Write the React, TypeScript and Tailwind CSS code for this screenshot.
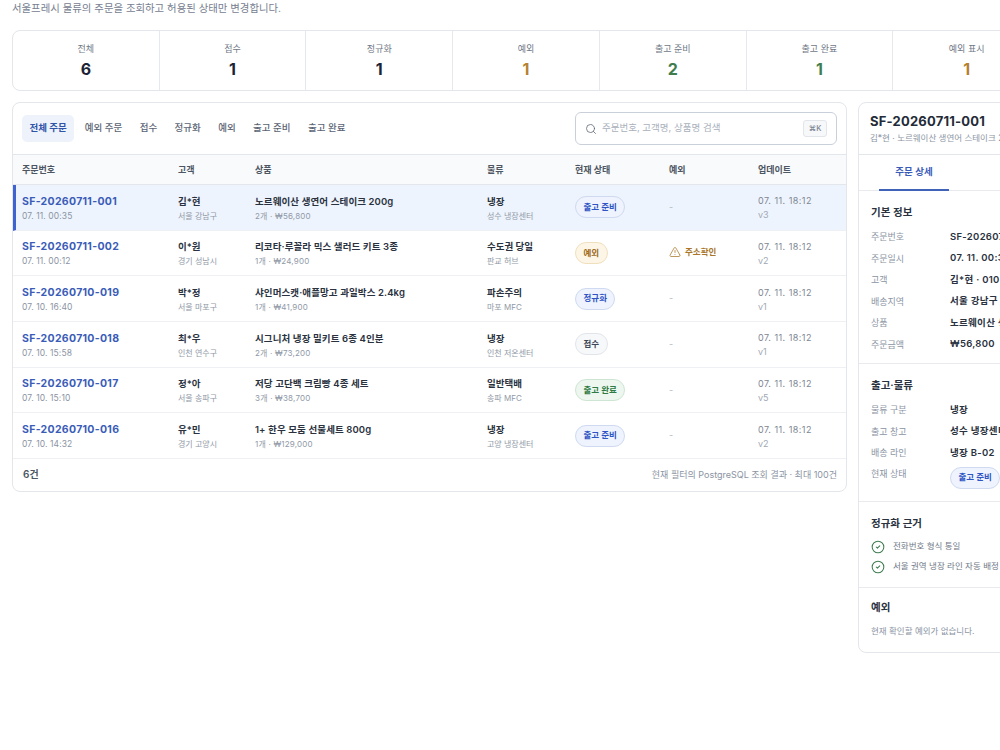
import { AlertTriangle, CircleCheck, Search } from 'lucide-react'

type Status = '출고 준비' | '예외' | '정규화' | '접수' | '출고 완료'

interface Order {
  id: string
  date: string
  customer: string
  region: string
  product: string
  meta: string
  logistics: string
  hub: string
  status: Status
  exception?: string
  version: string
}

const stats = [
  { label: '전체', value: '6', color: 'text-[#1a2233]' },
  { label: '접수', value: '1', color: 'text-[#1a2233]' },
  { label: '정규화', value: '1', color: 'text-[#1a2233]' },
  { label: '예외', value: '1', color: 'text-[#b5812f]' },
  { label: '출고 준비', value: '2', color: 'text-[#3f7d4e]' },
  { label: '출고 완료', value: '1', color: 'text-[#3f7d4e]' },
  { label: '예외 표시', value: '1', color: 'text-[#b5812f]' },
]

const tabs = ['예외 주문', '접수', '정규화', '예외', '출고 준비', '출고 완료']

const orders: Order[] = [
  { id: 'SF-20260711-001', date: '07. 11. 00:35', customer: '김*현', region: '서울 강남구', product: '노르웨이산 생연어 스테이크 200g', meta: '2개 · ₩56,800', logistics: '냉장', hub: '성수 냉장센터', status: '출고 준비', version: 'v3' },
  { id: 'SF-20260711-002', date: '07. 11. 00:12', customer: '이*원', region: '경기 성남시', product: '리코타·루꼴라 믹스 샐러드 키트 3종', meta: '1개 · ₩24,900', logistics: '수도권 당일', hub: '판교 허브', status: '예외', exception: '주소확인', version: 'v2' },
  { id: 'SF-20260710-019', date: '07. 10. 16:40', customer: '박*정', region: '서울 마포구', product: '샤인머스캣·애플망고 과일박스 2.4kg', meta: '1개 · ₩41,900', logistics: '파손주의', hub: '마포 MFC', status: '정규화', version: 'v1' },
  { id: 'SF-20260710-018', date: '07. 10. 15:58', customer: '최*우', region: '인천 연수구', product: '시그니처 냉장 밀키트 6종 4인분', meta: '2개 · ₩73,200', logistics: '냉장', hub: '인천 저온센터', status: '접수', version: 'v1' },
  { id: 'SF-20260710-017', date: '07. 10. 15:10', customer: '정*아', region: '서울 송파구', product: '저당 고단백 크림빵 4종 세트', meta: '3개 · ₩38,700', logistics: '일반택배', hub: '송파 MFC', status: '출고 완료', version: 'v5' },
  { id: 'SF-20260710-016', date: '07. 10. 14:32', customer: '유*민', region: '경기 고양시', product: '1+ 한우 모둠 선물세트 800g', meta: '1개 · ₩129,000', logistics: '냉장', hub: '고양 냉장센터', status: '출고 준비', version: 'v2' },
]

const basicInfo = [
  ['주문번호', 'SF-20260711-001'],
  ['주문일시', '07. 11. 00:35'],
  ['고객', '김*현 · 010-****-1234'],
  ['배송지역', '서울 강남구'],
  ['상품', '노르웨이산 생연어 스테이크'],
  ['주문금액', '₩56,800'],
]

const shipInfo = [
  ['물류 구분', '냉장'],
  ['출고 창고', '성수 냉장센터'],
  ['배송 라인', '냉장 B-02'],
]

function StatusBadge({ status }: { status: Status }) {
  const tone =
    status === '예외'
      ? 'bg-[#fdf5e6] border-[#f0dfbd] text-[#9a6a1c]'
      : status === '접수'
        ? 'bg-[#f7f8fa] border-[#e1e5eb] text-[#3d4656]'
        : status === '출고 완료'
          ? 'bg-[#edf7ef] border-[#cfe5d4] text-[#2f7a45]'
          : 'bg-[#eef3fd] border-[#cfdaf1] text-[#2f54c4]'
  return (
    <span className={`inline-flex h-[22px] items-center rounded-full border px-[7.5px] text-[8.5px] font-semibold ${tone}`}>
      {status}
    </span>
  )
}

function InfoRow({ label, value }: { label: string; value: string }) {
  return (
    <div className="flex h-[21.5px] items-center whitespace-nowrap">
      <span className="w-[79px] shrink-0 text-[9px] text-[#8b94a3]">{label}</span>
      <span className="text-[9.5px] font-semibold tracking-[0.3px] text-[#2a3240]">{value}</span>
    </div>
  )
}

export default function App() {
  return (
    <div className="h-[750px] w-[1000px] overflow-hidden bg-white font-['Inter','Noto_Sans_CJK_KR',sans-serif]">
      <div className="w-[1040px] pl-3">
        <p className="h-[30px] pt-[2px] text-[10.4px] leading-[14px] text-[#778090]">
          서울프레시 물류의 주문을 조회하고 허용된 상태만 변경합니다.
        </p>

        <div className="grid w-[1029px] grid-cols-7 divide-x divide-[#e5e8ed] rounded-[8px] border border-[#e3e6eb]">
          {stats.map((s) => (
            <div key={s.label} className="flex h-[59px] flex-col items-center pt-[12px]">
              <span className="text-[9px] leading-[12px] text-[#6f7886]">{s.label}</span>
              <span className={`mt-[3px] text-[16px] font-bold leading-[22px] ${s.color}`}>{s.value}</span>
            </div>
          ))}
        </div>

        <div className="mt-[11px] flex items-start gap-[11px]">
          <div className="w-[835px] shrink-0 overflow-hidden rounded-[8px] border border-[#e3e6eb]">
            <div className="flex h-[51px] items-center justify-between pl-[9px] pr-[9px]">
              <div className="flex items-center gap-[17.4px] text-[9.5px] text-[#5b6474]">
                <span className="-mr-[7px] flex h-[27px] items-center rounded-[5px] bg-[#eef3fb] px-[7.5px] font-semibold text-[#2f54a8]">전체 주문</span>
                {tabs.map((t) => (
                  <span key={t} className="font-medium">{t}</span>
                ))}
              </div>
              <div className="flex h-[33px] w-[262px] items-center rounded-[6px] border border-[#c9d0da] pl-[9px] pr-[9px]">
                <Search className="h-[12px] w-[12px] text-[#5f6876]" strokeWidth={1.6} />
                <span className="ml-[5px] text-[9.5px] text-[#a9b0bb]">주문번호, 고객명, 상품명 검색</span>
                <span className="ml-auto flex h-[17px] w-[24px] items-center justify-center rounded-[3px] border border-[#e2e5ea] bg-[#f7f8fa] text-[7.5px] font-medium text-[#7b8492]">⌘K</span>
              </div>
            </div>

            <div className="grid h-[31px] grid-cols-[156px_77px_232px_88px_94px_89px_1fr] items-center border-y border-[#e3e6eb] bg-[#f9fafb] pl-[9px] text-[9px] font-semibold text-[#4d5663]">
              <span>주문번호</span>
              <span>고객</span>
              <span>상품</span>
              <span>물류</span>
              <span>현재 상태</span>
              <span>예외</span>
              <span>업데이트</span>
            </div>

            {orders.map((o, i) => (
              <div
                key={o.id}
                className={`grid h-[45.67px] grid-cols-[156px_77px_232px_88px_94px_89px_1fr] items-center border-b border-[#eef0f3] pt-[2px] ${i === 0 ? 'border-l-[3px] border-l-[#3f63d0] bg-[#eef4fd] pl-[6px]' : 'pl-[9px]'}`}
              >
                <div>
                  <div className="text-[10.5px] font-bold leading-[15px] tracking-[0.3px] text-[#3a5cb8]">{o.id}</div>
                  <div className="mt-[1px] text-[8.5px] leading-[13px] tracking-[0.1px] text-[#8b94a3]">{o.date}</div>
                </div>
                <div>
                  <div className="text-[9.5px] font-semibold leading-[15px] text-[#2a3240]">{o.customer}</div>
                  <div className="mt-[1px] text-[8px] leading-[13px] text-[#9099a7]">{o.region}</div>
                </div>
                <div>
                  <div className="text-[9.5px] font-semibold leading-[15px] tracking-[0.1px] text-[#2a3240]">{o.product}</div>
                  <div className="mt-[1px] text-[8px] leading-[13px] tracking-[0.2px] text-[#9099a7]">{o.meta}</div>
                </div>
                <div>
                  <div className="text-[9.5px] font-semibold leading-[15px] text-[#2a3240]">{o.logistics}</div>
                  <div className="mt-[1px] text-[8px] leading-[13px] text-[#9099a7]">{o.hub}</div>
                </div>
                <div className="flex items-center pb-[2px]">
                  <StatusBadge status={o.status} />
                </div>
                <div className="flex items-center pb-[3px]">
                  {o.exception ? (
                    <span className="flex items-center gap-[4px] text-[8.5px] font-semibold text-[#a9762a]">
                      <AlertTriangle className="h-[12px] w-[12px]" strokeWidth={1.5} />
                      {o.exception}
                    </span>
                  ) : (
                    <span className="text-[9px] text-[#b4bac4]">-</span>
                  )}
                </div>
                <div>
                  <div className="text-[9px] leading-[14px] tracking-[0.45px] text-[#7d8694]">07. 11. 18:12</div>
                  <div className="text-[9px] leading-[14px] text-[#a0a8b4]">{o.version}</div>
                </div>
              </div>
            ))}

            <div className="flex h-[32px] items-center justify-between pl-[10px] pr-[9px]">
              <span className="text-[10px] font-semibold text-[#4d5663]">6건</span>
              <span className="text-[9px] text-[#8b94a3]">현재 필터의 PostgreSQL 조회 결과 · 최대 100건</span>
            </div>
          </div>

          <div className="h-[551px] w-[300px] shrink-0 overflow-hidden rounded-[8px] border border-[#e3e6eb]">
            <div className="h-[52px] border-b border-[#e3e6eb] pl-[11px] pt-[9px]">
              <div className="text-[13px] font-bold leading-[18px] tracking-[0.2px] text-[#232b38]">SF-20260711-001</div>
              <div className="mt-[2px] whitespace-nowrap text-[8.5px] leading-[13px] text-[#8b94a3]">김*현 · 노르웨이산 생연어 스테이크 200g</div>
            </div>
            <div className="h-[36px] border-b border-[#e8eaee] pl-[20px]">
              <div className="flex h-[36px] w-[70px] items-center justify-center border-b-2 border-[#3f63b8] text-[9.5px] font-semibold text-[#3a5cb8]">주문 상세</div>
            </div>

            <section className="border-b border-[#e8eaee] px-[12px] pb-[8px] pt-[14px]">
              <h3 className="mb-[5px] text-[10.5px] font-semibold leading-[16px] text-[#2a3240]">기본 정보</h3>
              {basicInfo.map(([label, value]) => (
                <InfoRow key={label} label={label} value={value} />
              ))}
            </section>

            <section className="border-b border-[#e8eaee] px-[12px] pb-[12px] pt-[14px]">
              <h3 className="mb-[5px] text-[10.5px] font-semibold leading-[16px] text-[#2a3240]">출고·물류</h3>
              {shipInfo.map(([label, value]) => (
                <InfoRow key={label} label={label} value={value} />
              ))}
              <div className="flex items-start pt-[3px]">
                <span className="w-[79px] text-[9px] leading-[14px] text-[#8b94a3]">현재 상태</span>
                <StatusBadge status="출고 준비" />
              </div>
            </section>

            <section className="border-b border-[#e8eaee] px-[12px] pb-[10px] pt-[14px]">
              <h3 className="mb-[5px] text-[10.5px] font-semibold leading-[16px] text-[#2a3240]">정규화 근거</h3>
              <div className="flex h-[20px] items-center gap-[8px] text-[8.5px] text-[#6f7886]">
                <CircleCheck className="h-[14px] w-[14px] text-[#3f7d50]" strokeWidth={1.8} />
                전화번호 형식 통일
              </div>
              <div className="flex h-[20px] items-center gap-[8px] whitespace-nowrap text-[8.5px] text-[#6f7886]">
                <CircleCheck className="h-[14px] w-[14px] text-[#3f7d50]" strokeWidth={1.8} />
                서울 권역 냉장 라인 자동 배정
              </div>
            </section>

            <section className="px-[12px] pt-[12px]">
              <h3 className="mb-[8px] text-[10.5px] font-semibold leading-[16px] text-[#2a3240]">예외</h3>
              <p className="text-[8.5px] leading-[14px] text-[#8b94a3]">현재 확인할 예외가 없습니다.</p>
            </section>
          </div>
        </div>
      </div>
    </div>
  )
}
